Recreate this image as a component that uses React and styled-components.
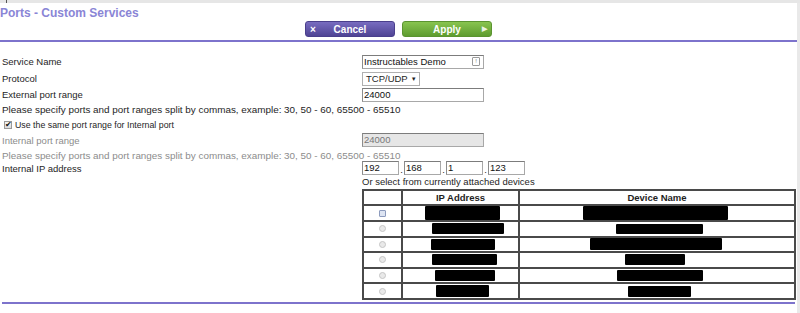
import styled, { createGlobalStyle } from "styled-components";

const GlobalStyle = createGlobalStyle`
  html, body {
    margin: 0;
    padding: 0;
    background: #fff;
    overflow: hidden;
  }
  body {
    font-family: "Liberation Sans", Arial, sans-serif;
    color: #1e1e1e;
  }
`

const Page = styled.div`
  width: 800px;
  height: 313px;
  display: flex;
  flex-direction: column;
`
const TopStrip = styled.div`
  height: 3px;
  background: #e6e6e6;
  position: relative;
  &::after {
    content: "";
    position: absolute;
    left: 6px;
    top: 0;
    width: 1px;
    height: 3px;
    background: #555;
  }
`
const Body = styled.div`
  flex: 1;
  display: flex;
`
const Main = styled.div`
  flex: 1;
`
const Gutter = styled.div`
  width: 3px;
  background: #e9e9e9;
`
const Title = styled.h1`
  margin: 3px 0 0 0;
  font-size: 12px;
  line-height: 14px;
  font-weight: bold;
  color: #8a85d6;
`
const ButtonBar = styled.div`
  display: flex;
  justify-content: center;
  gap: 7px;
  margin-top: 1px;
  padding-bottom: 3px;
  border-bottom: 2px solid #7d73cc;
`
const Button = styled.div`
  width: 90px;
  height: 16px;
  box-sizing: border-box;
  border-radius: 3px;
  display: grid;
  grid-template-columns: 14px 1fr 14px;
  align-items: center;
  color: #fff;
  font-size: 10px;
  font-weight: bold;
  background: ${p => p.green
    ? "linear-gradient(#88c44f, #5e9c2f)"
    : "linear-gradient(#786cc0, #4f4494)"};
  border: 1px solid ${p => p.green ? "#5b9430" : "#4a3f8c"};
`
const ButtonIcon = styled.span`
  text-align: center;
  font-size: ${p => p.small ? "7px" : "10px"};
  opacity: ${p => p.small ? 0.85 : 1};
`
const ButtonLabel = styled.span`
  text-align: center;
`

const Form = styled.div`
  margin-top: 11px;
  font-size: 9.5px;
`
const Row = styled.div`
  display: flex;
  align-items: center;
  height: ${p => p.h}px;
  color: ${p => p.muted ? "#8c8c8c" : "#1e1e1e"};
`
const Label = styled.div`
  width: 360px;
  padding-left: 2px;
  flex-shrink: 0;
`
const Note = styled.div`
  padding-left: 2px;
  font-size: 9.9px;
`
const Field = styled.div`
  width: ${p => p.w}px;
  height: 14px;
  flex-shrink: 0;
  box-sizing: border-box;
  border: 1px solid #a8a8a8;
  border-top-color: #7c7c7c;
  border-left-color: #8c8c8c;
  background: ${p => p.disabled ? "#e6e6e6" : "#fff"};
  color: ${p => p.disabled ? "#777" : "#111"};
  font-size: 9.5px;
  line-height: 12px;
  padding-left: 1px;
  display: flex;
  align-items: center;
  justify-content: space-between;
`
const AutoBadge = styled.span`
  width: 6px;
  height: 7px;
  border: 1px solid #9a9a9a;
  border-radius: 1px;
  font-size: 6px;
  line-height: 7px;
  text-align: center;
  color: #777;
  margin-right: 3px;
`
const Select = styled.div`
  width: 58px;
  height: 14px;
  box-sizing: border-box;
  border: 1px solid #b0b0b0;
  background: #fff;
  padding-left: 3px;
  font-size: 9.5px;
  line-height: 12px;
  display: flex;
  gap: 3px;
  align-items: center;
`
const Caret = styled.span`
  font-size: 6px;
`
const CheckRow = styled.div`
  display: flex;
  align-items: center;
  gap: 3px;
  padding-left: 4px;
  font-size: 8.8px;
`
const CheckBox = styled.span`
  width: 8px;
  height: 8px;
  box-sizing: border-box;
  border: 1px solid #9a9a9a;
  background: linear-gradient(#f4f4f4, #dcdcdc);
  font-size: 8px;
  line-height: 6px;
  color: #111;
  display: flex;
  justify-content: center;
`
const IpGroup = styled.div`
  display: flex;
  align-items: flex-end;
`
const Dot = styled.span`
  width: 5px;
  text-align: center;
  line-height: 10px;
`
const Right = styled.div`
  margin-left: 362px;
`
const Hint = styled.div`
  height: 15px;
  line-height: 15px;
  font-size: 9.5px;
`
const Table = styled.table`
  width: 434px;
  border-collapse: separate;
  border-spacing: 0;
  border: 1px solid #4a4a4a;
  font-size: 9.5px;
`
const Th = styled.th`
  border: 1px solid #4a4a4a;
  height: 13px;
  padding: 0;
  font-weight: bold;
  width: ${p => p.w}px;
`
const Td = styled.td`
  border: 1px solid #4a4a4a;
  height: 13.6px;
  padding: 0;
  line-height: 0;
  text-align: ${p => p.center ? "center" : "left"};
`
const Radio = styled.span`
  display: inline-block;
  width: 7px;
  height: 7px;
  box-sizing: border-box;
  border-radius: ${p => p.selected ? "1px" : "50%"};
  border: 1px solid ${p => p.selected ? "#8d9bbd" : "#c6c6c6"};
  background: ${p => p.selected ? "#dde4f2" : "#e9e9e9"};
`
const Redact = styled.span`
  display: inline-block;
  height: ${p => p.h}px;
  width: ${p => p.w}px;
  background: #000;
  border-radius: 1px;
`
const BottomRule = styled.div`
  margin: 2px 2px 0 2px;
  height: 2px;
  background: #7d73cc;
`

const IP_LEFT = 402
const DEV_LEFT = 519

const devices = [
  { ip: [424, 499, 14], dev: [582, 727, 14], selected: true },
  { ip: [431, 503, 11], dev: [615, 702, 10] },
  { ip: [430, 494, 11], dev: [589, 721, 12] },
  { ip: [431, 496, 11], dev: [624, 684, 11] },
  { ip: [434, 494, 11], dev: [616, 702, 11] },
  { ip: [435, 488, 12], dev: [627, 690, 11] },
]

const note = "Please specify ports and port ranges split by commas, example: 30, 50 - 60, 65500 - 65510"

const App = () => {
  return (
    <Page>
      <GlobalStyle />
      <TopStrip />
      <Body>
        <Main>
          <Title>Ports - Custom Services</Title>
          <ButtonBar>
            <Button>
              <ButtonIcon>×</ButtonIcon>
              <ButtonLabel>Cancel</ButtonLabel>
              <span />
            </Button>
            <Button green>
              <span />
              <ButtonLabel>Apply</ButtonLabel>
              <ButtonIcon small>▶</ButtonIcon>
            </Button>
          </ButtonBar>

          <Form>
            <Row h={17}>
              <Label>Service Name</Label>
              <Field w={122}>Instructables Demo<AutoBadge>!</AutoBadge></Field>
            </Row>
            <Row h={17}>
              <Label>Protocol</Label>
              <Select>TCP/UDP<Caret>▼</Caret></Select>
            </Row>
            <Row h={15}>
              <Label>External port range</Label>
              <Field w={122}>24000</Field>
            </Row>
            <Row h={15}>
              <Note>{note}</Note>
            </Row>
            <Row h={15}>
              <CheckRow>
                <CheckBox>✔</CheckBox>
                Use the same port range for Internal port
              </CheckRow>
            </Row>
            <Row h={16} muted>
              <Label>Internal port range</Label>
              <Field w={122} disabled>24000</Field>
            </Row>
            <Row h={14} muted>
              <Note>{note}</Note>
            </Row>
            <Row h={12}>
              <Label>Internal IP address</Label>
              <IpGroup>
                <Field w={37}>192</Field>
                <Dot>.</Dot>
                <Field w={37}>168</Field>
                <Dot>.</Dot>
                <Field w={37}>1</Field>
                <Dot>.</Dot>
                <Field w={37}>123</Field>
              </IpGroup>
            </Row>
          </Form>

          <Right>
            <Hint>Or select from currently attached devices</Hint>
            <Table>
              <thead>
                <tr>
                  <Th w={37}></Th>
                  <Th w={115}>IP Address</Th>
                  <Th>Device Name</Th>
                </tr>
              </thead>
              <tbody>
                {devices.map((d, i) => (
                  <tr key={i}>
                    <Td center><Radio selected={d.selected} /></Td>
                    <Td>
                      <Redact
                        w={d.ip[1] - d.ip[0]}
                        h={d.ip[2]}
                        style={{ marginLeft: d.ip[0] - IP_LEFT }}
                      />
                    </Td>
                    <Td>
                      <Redact
                        w={d.dev[1] - d.dev[0]}
                        h={d.dev[2]}
                        style={{ marginLeft: d.dev[0] - DEV_LEFT }}
                      />
                    </Td>
                  </tr>
                ))}
              </tbody>
            </Table>
          </Right>
          <BottomRule />
        </Main>
        <Gutter />
      </Body>
    </Page>
  );
};

export default App;
